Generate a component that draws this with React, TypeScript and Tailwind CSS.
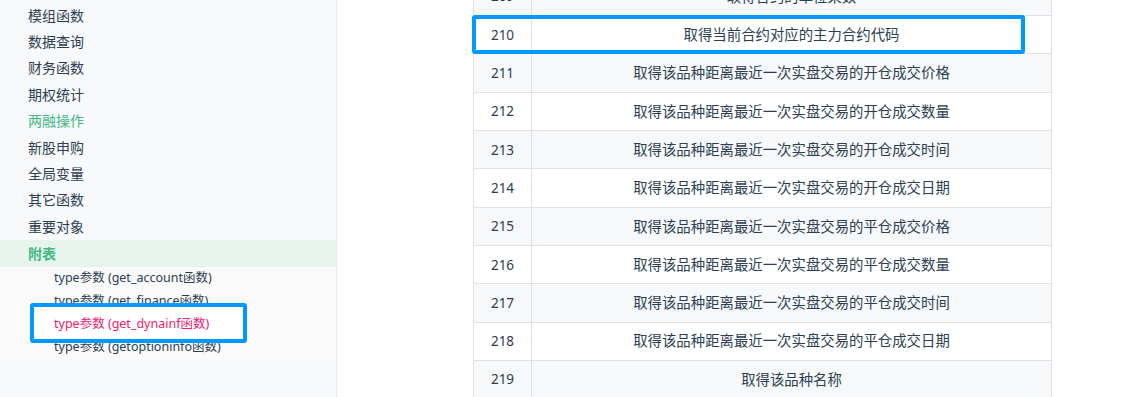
const font = '"Noto Sans", "Noto Sans CJK SC", sans-serif'

const topItems = [
  { label: '模组函数' },
  { label: '数据查询' },
  { label: '财务函数' },
  { label: '期权统计' },
  { label: '两融操作', green: true },
  { label: '新股申购' },
  { label: '全局变量' },
  { label: '其它函数' },
  { label: '重要对象' },
]

const subItems = [
  'type参数 (get_account函数)',
  'type参数 (get_finance函数)',
  'type参数 (get_dynainf函数)',
  'type参数 (getoptioninfo函数)',
]

const rows: [number, string][] = [
  [209, '取得合约的单位乘数'],
  [210, '取得当前合约对应的主力合约代码'],
  [211, '取得该品种距离最近一次实盘交易的开仓成交价格'],
  [212, '取得该品种距离最近一次实盘交易的开仓成交数量'],
  [213, '取得该品种距离最近一次实盘交易的开仓成交时间'],
  [214, '取得该品种距离最近一次实盘交易的开仓成交日期'],
  [215, '取得该品种距离最近一次实盘交易的平仓成交价格'],
  [216, '取得该品种距离最近一次实盘交易的平仓成交数量'],
  [217, '取得该品种距离最近一次实盘交易的平仓成交时间'],
  [218, '取得该品种距离最近一次实盘交易的平仓成交日期'],
  [219, '取得该品种名称'],
]

function Sidebar() {
  return (
    <div className="w-[337px] h-full shrink-0 bg-[#f8f9fb] border-r border-[#eaecef] pt-[2px]">
      {topItems.map((it) => (
        <div
          key={it.label}
          className={`h-[26.4px] flex items-center pl-[28px] text-[14px] ${it.green ? 'text-[#42b983]' : 'text-[#2c3e50]'}`}
        >
          {it.label}
        </div>
      ))}
      <div className="h-[27px] flex items-center pl-[28px] text-[14px] font-bold text-[#42b983] bg-[#e7f4ee]">
        附表
      </div>
      <div className="bg-[#fafafa]">
        {subItems.map((s, i) => (
          <div
            key={s}
            className={`h-[23px] flex items-center pl-[54px] text-[12.5px] ${i === 2 ? 'relative z-20 text-[#f0206a]' : 'text-[#2c3e50]'}`}
          >
            {s}
          </div>
        ))}
      </div>
    </div>
  )
}

function Table() {
  return (
    <div className="ml-[136px] w-[579px] -mt-[22.33px] border-x border-[#dfe2e5] text-[14.4px] text-[#2c3e50]">
      {rows.map(([n, text]) => (
        <div
          key={n}
          className={`h-[38.33px] flex border-b border-[#dfe2e5] ${n % 2 === 1 ? 'bg-[#f6f8fa]' : 'bg-white'}`}
        >
          <div className="w-[58px] shrink-0 border-r border-[#dfe2e5] flex items-center justify-center text-[13.5px]">{n}</div>
          <div className="flex-1 flex items-center justify-center">{text}</div>
        </div>
      ))}
    </div>
  )
}

export default function App() {
  return (
    <div className="relative w-[1130px] h-[397px] overflow-hidden bg-white flex" style={{ fontFamily: font }}>
      <Sidebar />
      <div className="flex-1 h-full overflow-hidden">
        <Table />
      </div>
      {/* highlight marks */}
      <div className="absolute left-[472px] top-[15px] w-[553px] h-[39px] border-4 border-[#0099ff] rounded-[3px] z-10" />
      <div className="absolute left-[30px] top-[303px] w-[217px] h-[40px] border-4 border-[#0099ff] rounded-[3px] bg-white z-10" />
    </div>
  )
}
